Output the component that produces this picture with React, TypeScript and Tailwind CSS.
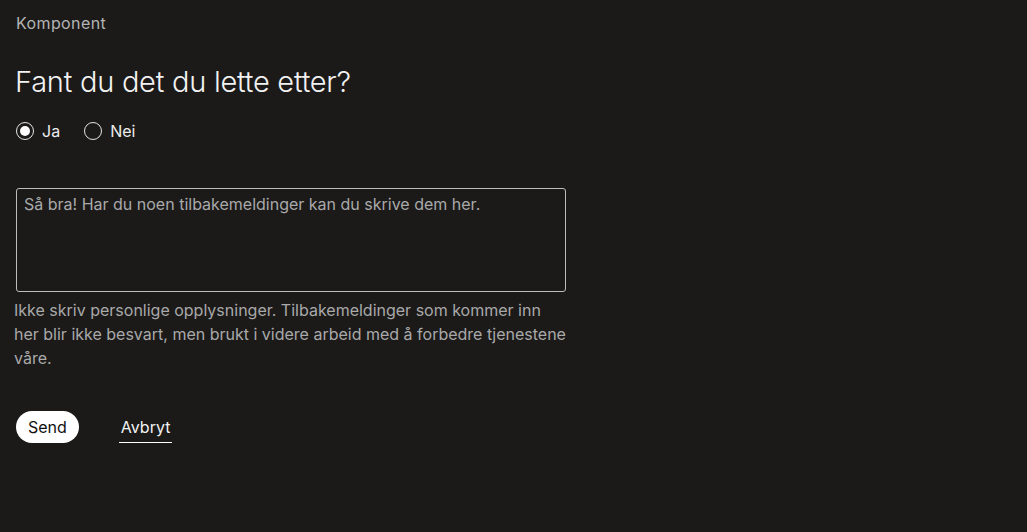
import React, { useState } from 'react';

const font = { fontFamily: 'Inter, "Liberation Sans", sans-serif' };

function Radio({ label, checked, onChange }: { label: string; checked: boolean; onChange: () => void }) {
  return (
    <label className="flex items-center gap-2 cursor-pointer" onClick={onChange}>
      <span className="w-[18px] h-[18px] rounded-full border border-[#e5e5e5] flex items-center justify-center">
        {checked && <span className="w-[10px] h-[10px] rounded-full bg-white" />}
      </span>
      <span className="text-[16px] text-[#ececec]">{label}</span>
    </label>
  );
}

export default function App() {
  const [answer, setAnswer] = useState<'ja' | 'nei'>('ja');
  const [text, setText] = useState('');

  return (
    <div className="min-h-screen w-full bg-[#1b1a19] px-4 pt-[12px]" style={font}>
      <div className="text-[16px] leading-[22px] text-[#b4b4b4] tracking-[0.4px]">Komponent</div>

      <h2 className="mt-[30px] -ml-[1px] text-[29px] leading-[36px] font-light text-[#f2f2f2] tracking-[-0.25px]">
        Fant du det du lette etter?
      </h2>

      <div className="mt-[19px] flex items-center gap-[24px]">
        <Radio label="Ja" checked={answer === 'ja'} onChange={() => setAnswer('ja')} />
        <Radio label="Nei" checked={answer === 'nei'} onChange={() => setAnswer('nei')} />
      </div>

      <textarea
        value={text}
        onChange={(e) => setText(e.target.value)}
        placeholder="Så bra! Har du noen tilbakemeldinger kan du skrive dem her."
        className="mt-[45px] block w-[550px] h-[104px] resize-none rounded-[3px] border border-[#bdbdbd] bg-transparent px-[7px] py-[3px] text-[16px] leading-[24px] text-[#ececec] placeholder:text-[#a9a9a9] outline-none"
        style={font}
      />

      <p className="mt-[6px] -ml-[2px] w-[552px] text-[16px] leading-[24px] text-[#a9a9a9]">
        Ikke skriv personlige opplysninger. Tilbakemeldinger som kommer inn her blir ikke besvart, men brukt i videre arbeid med å forbedre tjenestene våre.
      </p>

      <div className="mt-[41px] flex items-center gap-[40px]">
        <button className="h-[32px] px-[12px] rounded-full bg-white text-[#111] text-[16px]">Send</button>
        <button className="h-[32px] px-[2px] border-b border-white text-[#f2f2f2] text-[16px]">Avbryt</button>
      </div>
    </div>
  );
}
